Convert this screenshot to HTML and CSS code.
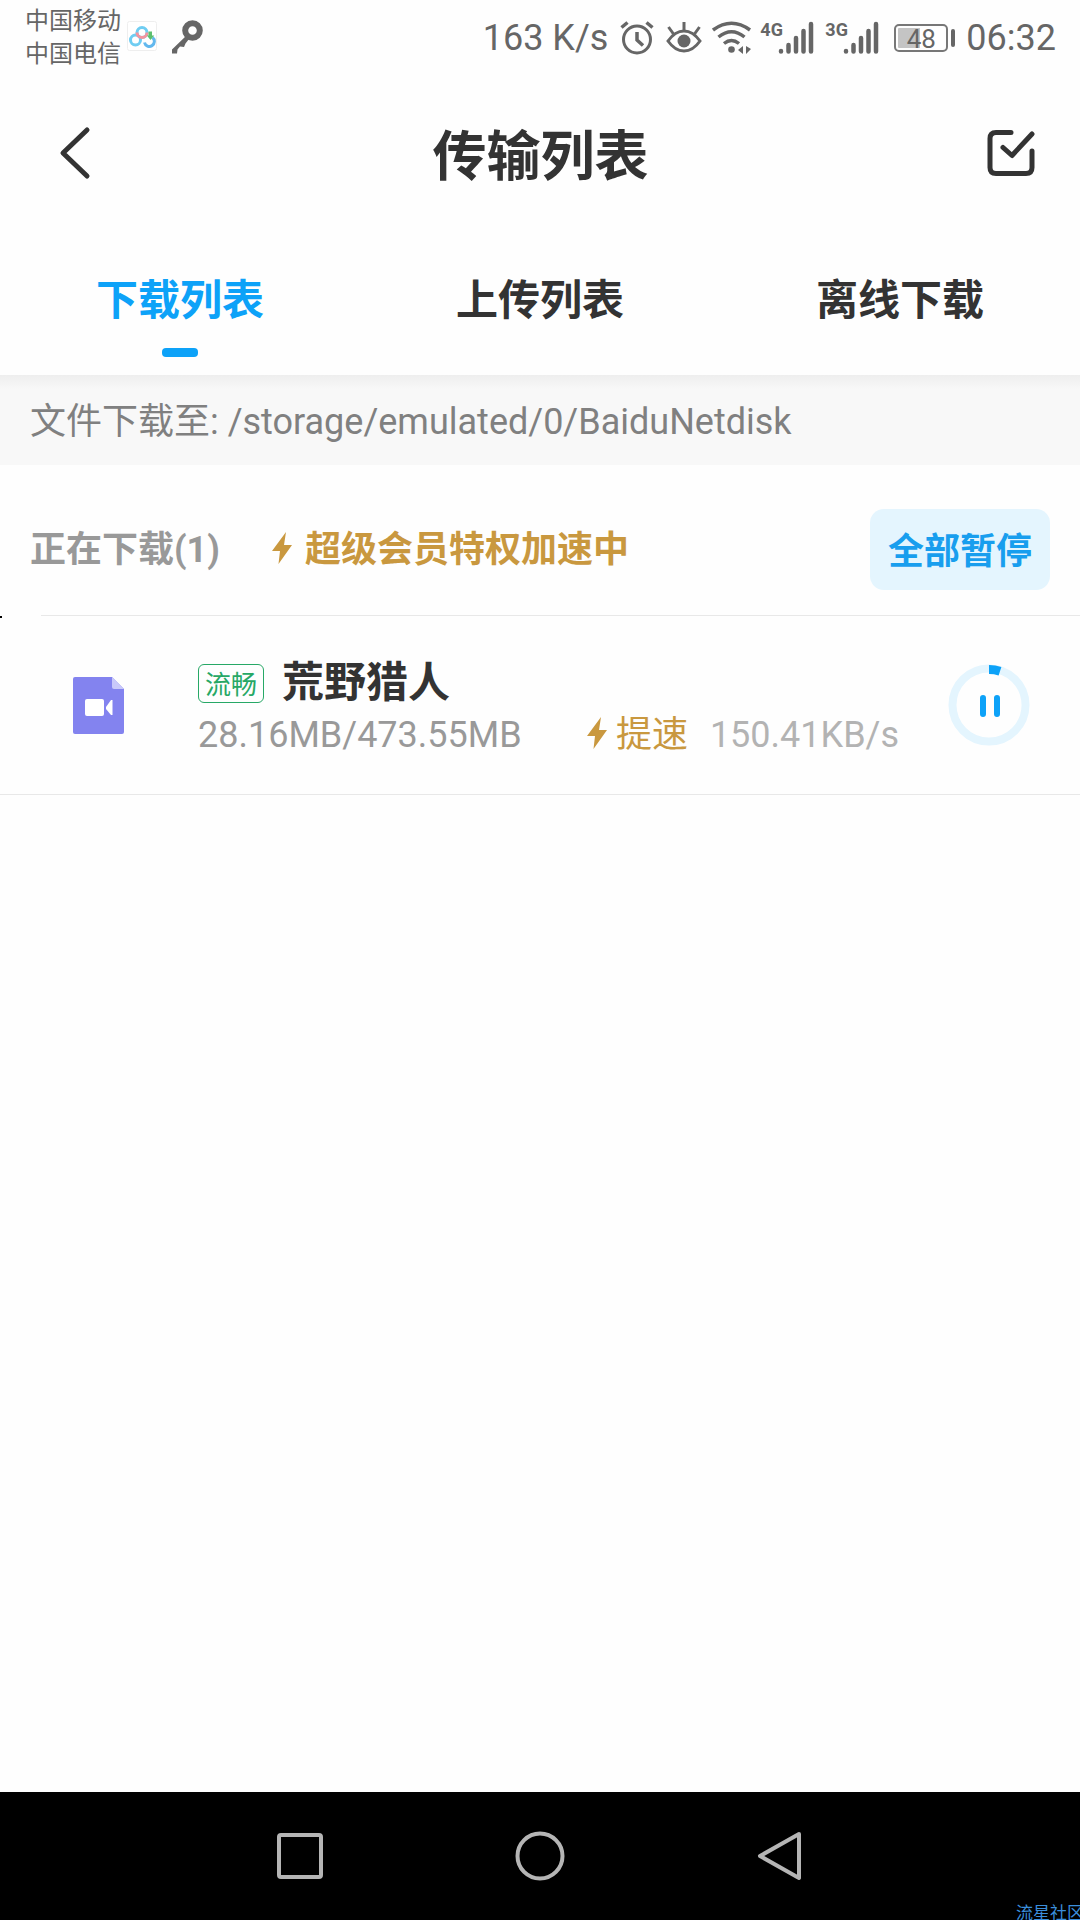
FILE: index.html
```html
<!DOCTYPE html>
<html lang="zh-CN">
<head>
<meta charset="utf-8">
<meta name="viewport" content="width=device-width, initial-scale=1">
<title>传输列表</title>
<link rel="stylesheet" href="styles.css">
</head>
<body>
<div class="screen">
  <div class="status">
    <div class="carriers"><span>中国移动</span><span>中国电信</span></div>
    <svg class="app-badge" width="30" height="30" viewBox="0 0 30 30" fill="none">
      <rect x="0.5" y="0.5" width="29" height="29" rx="2" fill="#fff" stroke="#eee"/>
      <circle cx="8.500" cy="19" r="5" stroke="#6fcdf2" stroke-width="3"/>
      <path d="M17.500 21.500a5 5 0 1 0 8-5" stroke="#62b8ee" stroke-width="3"/>
      <circle cx="15" cy="11.500" r="5" stroke="#6fcdf2" stroke-width="3"/>
      <path d="M10 11.500a5 5 0 0 0 10 0" stroke="#f3949f" stroke-width="3"/>
      <path d="M21.500 10.500h3.500v4h2.200L23.500 19l-3.700-4.500h1.700z" fill="#5cbf6e"/>
    </svg>
    <svg class="key" width="32" height="34" viewBox="0 0 32 34" fill="none">
      <circle cx="21.500" cy="10.500" r="7.300" stroke="#666" stroke-width="6"/>
      <path d="M15 16L18 19L14.500 23.500L13 27L9 26.500L6.500 29.500L6 33.500H1V29.500Z" fill="#666"/>
    </svg>
    <div class="status-right">
      <span>163 K/s</span>
      <svg class="alarm" width="34" height="34" viewBox="0 0 34 34" fill="none" stroke="#666" stroke-width="3">
        <circle cx="17" cy="18.500" r="13.500"/><path d="M17 11v8l6 5.500M1.500 6.500l6-5M32.500 6.500l-6-5" stroke-width="3.500"/>
      </svg>
      <svg class="eye" width="36" height="34" viewBox="0 0 36 34" fill="none" stroke="#666" stroke-width="3">
        <path d="M2 20Q9 10 18 10T34 20Q27 30 18 30T2 20Z"/><circle cx="18" cy="20" r="6.500" fill="#666" stroke="none"/><path d="M18 1v8M2.500 6l5 7M33.500 6l-5 7"/>
      </svg>
      <svg class="wifi" width="40" height="34" viewBox="0 0 40 34" fill="none" stroke="#666" stroke-width="3.500">
        <path d="M1 9Q19.500-4.500 38 9M6.500 16Q19.500 5.500 32.500 16M12 22.500Q19.500 16.500 27 22.500"/><circle cx="19.500" cy="28.500" r="3.300" fill="#666" stroke="none"/><path d="M31 25v8l-5-4zM34 25v8l5-5z" fill="#666" stroke="none"/>
      </svg>
      <div class="signal"><span>4G</span>
        <svg width="36" height="34" viewBox="0 0 36 34" stroke="#666" stroke-width="4.500" stroke-linecap="round"><path d="M3 30v0.500M10.500 24v6.500M18 17v13.500M25.500 10v20.500M33 3v27.500"/></svg>
      </div>
      <div class="signal"><span>3G</span>
        <svg width="36" height="34" viewBox="0 0 36 34" stroke="#666" stroke-width="4.500" stroke-linecap="round"><path d="M3 30v0.500M10.500 24v6.500M18 17v13.500M25.500 10v20.500M33 3v27.500"/></svg>
      </div>
      <div class="battery"><span class="cell">48</span><span class="cap"></span></div>
      <span>06:32</span>
    </div>
  </div>

  <header class="header">
    <button class="icon-button" aria-label="返回">
      <svg width="32" height="54" viewBox="0 0 32 54" fill="none" stroke="#333" stroke-width="5" stroke-linecap="round" stroke-linejoin="round"><path d="M28 4L4 27L28 50"/></svg>
    </button>
    <h1>传输列表</h1>
    <button class="icon-button" aria-label="选择">
      <svg width="48" height="48" viewBox="0 0 48 48" fill="none" stroke="#333" stroke-width="5" stroke-linecap="round" stroke-linejoin="round"><path d="M24 3.500H9Q3 3.500 3 9.500V38.500Q3 44.500 9 44.500H39Q45 44.500 45 38.500V22"/><path d="M16 18.500L25 26.500L45 5"/></svg>
    </button>
  </header>

  <nav class="tabs">
    <a class="tab active" href="#download">下载列表</a>
    <a class="tab" href="#upload">上传列表</a>
    <a class="tab" href="#offline">离线下载</a>
  </nav>

  <p class="location">文件下载至: /storage/emulated/0/BaiduNetdisk</p>

  <main class="content" id="download">
    <section class="summary">
      <h2>正在下载(1)</h2>
      <p class="boost"><svg width="22" height="34" viewBox="0 0 22 34"><path d="M15 1L1 20H9L7.500 33L21 14H13Z" fill="#c9983f"/></svg>超级会员特权加速中</p>
      <button class="pause-all">全部暂停</button>
    </section>
    <article class="item">
      <span class="mark"></span>
      <svg class="file" width="51" height="57" viewBox="0 0 51 57">
        <path d="M2 0H39L51 12V55Q51 57 49 57H2Q0 57 0 55V2Q0 0 2 0Z" fill="#8383ef"/><path d="M39 0L51 12H41Q39 12 39 10Z" fill="#c9c9fa"/>
        <rect x="12" y="22" width="19" height="17" rx="2" fill="#fff"/><path d="M33 30L38 23H39.500V38H38L33 32Z" fill="#fff"/>
      </svg>
      <div class="details">
        <div class="name"><span class="tag">流畅</span><h3>荒野猎人</h3></div>
        <div class="meta">
          <span class="size">28.16MB/473.55MB</span>
          <a class="speed-up" href="#boost"><svg width="22" height="34" viewBox="0 0 22 34"><path d="M15 1L1 20H9L7.500 33L21 14H13Z" fill="#c9983f"/></svg>提速</a>
          <span class="rate">150.41KB/s</span>
        </div>
      </div>
      <button class="icon-button" aria-label="暂停">
        <svg width="82" height="82" viewBox="0 0 82 82" fill="none"><circle cx="41" cy="41" r="36.500" stroke="#e4f5fe" stroke-width="8"/><path d="M41 5.500A35.500 35.500 0 0 1 52 7.200" stroke="#0da2f8" stroke-width="9"/><path d="M35 34v16M49 34v16" stroke="#0da2f8" stroke-width="6" stroke-linecap="round"/></svg>
      </button>
    </article>
  </main>

  <footer class="system-nav">
    <button class="icon-button" aria-label="最近任务"><svg width="50" height="50" viewBox="0 0 50 50" fill="none" stroke="#b5b5b5" stroke-width="4"><rect x="4" y="4" width="42" height="42" rx="2"/></svg></button>
    <button class="icon-button" aria-label="主屏幕"><svg width="50" height="50" viewBox="0 0 50 50" fill="none" stroke="#b5b5b5" stroke-width="4"><circle cx="25" cy="25" r="22.500"/></svg></button>
    <button class="icon-button" aria-label="返回上一级"><svg width="50" height="50" viewBox="0 0 50 50" fill="none" stroke="#b5b5b5" stroke-width="4" stroke-linejoin="round"><path d="M44 3L5 25L44 47Z"/></svg></button>
    <span class="watermark">流星社区</span>
  </footer>
</div>
</body>
</html>
```
FILE: styles.css
```css
* { box-sizing: border-box; }

body {
  margin: 0;
  background: #fefefe;
  color: #333;
  font-family: Roboto, "Noto Sans CJK SC", sans-serif;
  font-size: 36px;
  line-height: 44px;
}

h1, h2, h3, p { margin: 0; }
a { color: inherit; text-decoration: none; }
button { border: 0; padding: 0; background: none; font: inherit; color: inherit; }
svg { display: block; flex: none; }

.screen {
  display: flex;
  flex-direction: column;
  min-height: 100vh;
}

.status {
  display: flex;
  align-items: center;
  height: 76px;
  padding: 0 24px 0 25px;
  color: #666;
}
.carriers {
  display: flex;
  flex-direction: column;
  font-size: 24px;
  line-height: 33px;
}
.app-badge { margin: 0 0 4px 6px; }
.key { margin: 0 0 2px 14px; }
.status-right {
  display: flex;
  align-items: center;
  margin-left: auto;
}
.alarm { margin: 0 12px; }
.wifi { margin-left: 10px; }
.signal {
  display: flex;
  align-items: flex-start;
  margin-left: 8px;
}
.signal + .signal { margin-left: 11px; }
.signal span {
  width: 18px;
  font-family: "Liberation Sans Narrow", Roboto, sans-serif;
  font-size: 18px;
  font-weight: 700;
  line-height: 18px;
}
.battery {
  display: flex;
  align-items: center;
  gap: 3px;
  margin: 0 11px 0 15px;
}
.cell {
  width: 54px;
  height: 28px;
  border: 2px solid #777;
  border-radius: 5px;
  background: linear-gradient(to right, #c4c4c4 48%, #fff 48%) content-box;
  padding: 2px;
  font-size: 26px;
  line-height: 22px;
  text-align: center;
}
.cap {
  width: 4px;
  height: 18px;
  border-radius: 2px;
  background: #666;
}

.header {
  display: flex;
  align-items: center;
  justify-content: space-between;
  height: 154px;
  padding: 0 45px 0 59px;
}
h1 {
  padding: 10px 0 0 3px;
  font-size: 54px;
  line-height: 64px;
}

.tabs {
  display: grid;
  grid-template-columns: repeat(3, 1fr);
  height: 145px;
}
.tab {
  display: flex;
  flex-direction: column;
  align-items: center;
  gap: 20px;
  padding-top: 43px;
  font-size: 42px;
  font-weight: 700;
  line-height: 55px;
}
.active { color: #0da2f8; }
.active::after {
  content: "";
  width: 36px;
  height: 9px;
  border-radius: 4px;
  background: #0da2f8;
}

.location {
  height: 90px;
  padding: 25px 30px 0;
  background: linear-gradient(#eee, #f8f8f8 14px);
  color: #808080;
}

.content { flex: 1; }
.summary {
  display: flex;
  align-items: center;
  height: 151px;
  padding: 18px 30px 0;
}
h2 {
  color: #999;
  font-size: 36px;
  line-height: 44px;
}
.boost {
  display: flex;
  align-items: center;
  gap: 12px;
  margin-left: 51px;
  color: #c9983f;
  font-weight: 700;
}
.boost svg, .speed-up svg { margin-bottom: 4px; }
.pause-all {
  height: 81px;
  margin-left: auto;
  padding: 4px 18px 0;
  border-radius: 14px;
  background: #e4f5fe;
  color: #189eee;
  font-weight: 700;
}

.item {
  position: relative;
  display: flex;
  align-items: center;
  height: 179px;
  padding: 0 50px 0 73px;
  border-bottom: 1px solid #e8e8e8;
}
.item::before {
  content: "";
  position: absolute;
  top: -1px;
  left: 41px;
  right: 0;
  height: 1px;
  background: #e8e8e8;
}
.mark {
  position: absolute;
  top: 0;
  left: 0;
  width: 2px;
  height: 2px;
  background: #000;
}
.details {
  flex: 1;
  margin: 0 49px 0 74px;
  padding-top: 6px;
}
.name {
  display: flex;
  align-items: center;
  gap: 18px;
}
.tag {
  height: 39px;
  padding: 0 6px;
  border: 1px solid #27a866;
  border-radius: 6px;
  color: #27a866;
  font-size: 26px;
  line-height: 40px;
}
h3 {
  font-size: 42px;
  line-height: 54px;
}
.meta {
  display: flex;
  align-items: center;
  color: #999;
  line-height: 50px;
}
.speed-up {
  display: flex;
  align-items: center;
  gap: 8px;
  margin-left: auto;
  color: #c9983f;
}
.rate {
  margin-left: 22px;
  color: #b3b3b3;
}

.system-nav {
  position: relative;
  display: flex;
  align-items: center;
  justify-content: center;
  gap: 190px;
  height: 128px;
  overflow: hidden;
  background: #000;
}
.watermark {
  position: absolute;
  right: -4px;
  bottom: -4px;
  color: #3b8edb;
  font-size: 17px;
  line-height: 22px;
}
```
